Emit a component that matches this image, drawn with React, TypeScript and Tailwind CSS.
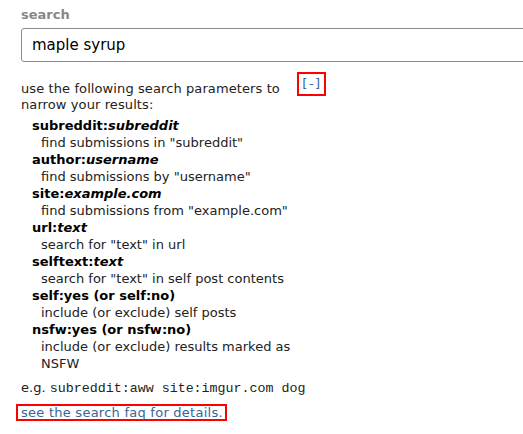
import React from "react";

const items: { k: string; v: string; d: string[] }[] = [
  { k: "subreddit:", v: "subreddit", d: ['find submissions in "subreddit"'] },
  { k: "author:", v: "username", d: ['find submissions by "username"'] },
  { k: "site:", v: "example.com", d: ['find submissions from "example.com"'] },
  { k: "url:", v: "text", d: ['search for "text" in url'] },
  { k: "selftext:", v: "text", d: ['search for "text" in self post contents'] },
  { k: "self:yes (or self:no)", v: "", d: ["include (or exclude) self posts"] },
  { k: "nsfw:yes (or nsfw:no)", v: "", d: ["include (or exclude) results marked as", "NSFW"] },
];

export default function App() {
  return (
    <div className="w-[523px] h-[434px] overflow-hidden bg-white text-[13px] text-[#222] font-['DejaVu_Sans',Verdana,sans-serif]">
      <div className="pl-[21px] pt-[7px]">
        <div className="font-bold text-[#888] leading-[16px]">search</div>
        <div className="mt-[5px] w-[520px] h-[34px] border border-[#8c8c8c] rounded-[3px] pl-[10px] flex items-center text-[15px] text-black">
          maple syrup
        </div>
        <div className="flex items-start mt-[10px]">
          <p className="w-[276px] leading-[16px] pt-[9px] tracking-[0.1px]">
            use the following search parameters to narrow your results:
          </p>
          <span className="border-2 border-[#f00] w-[29px] h-[24px] flex items-center justify-center text-[#369] text-[13px] tracking-[1.5px] pl-[1px]">
            [-]
          </span>
        </div>
        <dl className="mt-[4px] leading-[17px]">
          {items.map((it) => (
            <React.Fragment key={it.k}>
              <dt className="pl-[11px] font-bold text-black">
                {it.k}
                {it.v && <i>{it.v}</i>}
              </dt>
              {it.d.map((line) => (
                <dd key={line} className="pl-[20px]">
                  {line}
                </dd>
              ))}
            </React.Fragment>
          ))}
        </dl>
        <p className="mt-[7px] leading-[17px]">
          e.g.{" "}
          <code className="font-['Liberation_Mono',monospace] text-[13.33px]">
            subreddit:aww site:imgur.com dog
          </code>
        </p>
        <div className="mt-[6px] -ml-[5px]">
          <span className="inline-block border-2 border-[#f00] pl-[3px] pr-[2px] leading-[13px] text-[#369] tracking-[0.25px]">
            see the search faq for details.
          </span>
        </div>
      </div>
    </div>
  );
}
